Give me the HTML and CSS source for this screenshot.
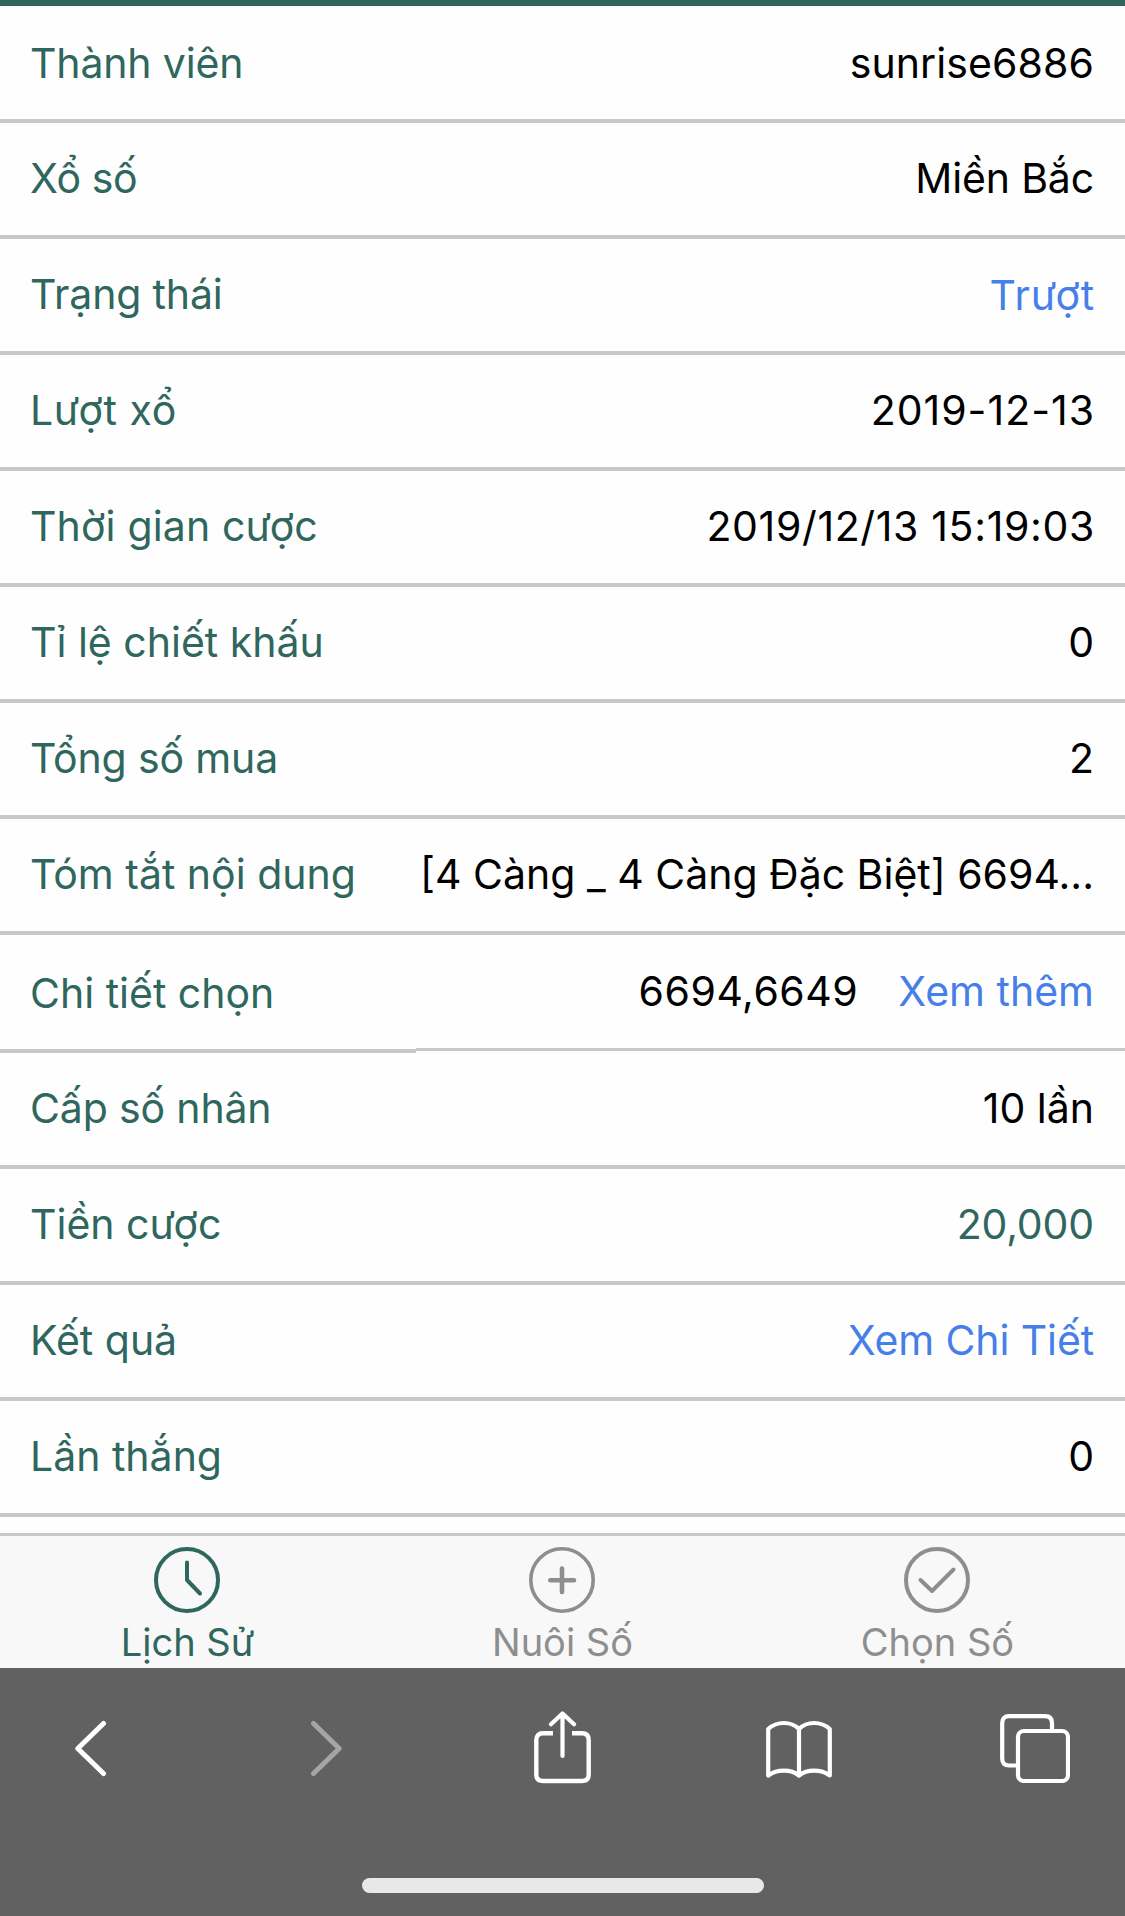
FILE: index.html
```html
<!DOCTYPE html>
<html lang="vi">
<head>
    <meta charset="UTF-8">
    <meta name="viewport" content="width=device-width, initial-scale=1.0">
    <title>Chi tiết cược</title>
    <link rel="stylesheet" href="styles.css">
</head>
<body>

    <div class="page">
        <header class="header"></header>

        <main class="list">
            <div class="row first">
                <span class="label tight">Thành viên</span>
                <span class="value user">sunrise6886</span>
            </div>
            <div class="row">
                <span class="label tighter">Xổ số</span>
                <span class="value tight">Miền Bắc</span>
            </div>
            <div class="row">
                <span class="label tight">Trạng thái</span>
                <span class="value status blue">Trượt</span>
            </div>
            <div class="row">
                <span class="label wide">Lượt xổ</span>
                <span class="value date">2019-12-13</span>
            </div>
            <div class="row">
                <span class="label loose">Thời gian cược</span>
                <span class="value time">2019/12/13 15:19:03</span>
            </div>
            <div class="row">
                <span class="label">Tỉ lệ chiết khấu</span>
                <span class="value">0</span>
            </div>
            <div class="row">
                <span class="label tight">Tổng số mua</span>
                <span class="value">2</span>
            </div>
            <div class="row">
                <span class="label">Tóm tắt nội dung</span>
                <span class="value">[4 Càng _ 4 Càng Đặc Biệt] 6694...</span>
            </div>
            <div class="row split">
                <div class="cell-label"><span class="label">Chi tiết chọn</span></div>
                <div class="cell-value">
                    <span class="value numbers">6694,6649</span>
                    <a class="value blue">Xem thêm</a>
                </div>
            </div>
            <div class="row">
                <span class="label tight">Cấp số nhân</span>
                <span class="value">10 lần</span>
            </div>
            <div class="row">
                <span class="label">Tiền cược</span>
                <span class="value green tight">20,000</span>
            </div>
            <div class="row">
                <span class="label">Kết quả</span>
                <a class="value blue detail">Xem Chi Tiết</a>
            </div>
            <div class="row">
                <span class="label">Lần thắng</span>
                <span class="value">0</span>
            </div>
        </main>

        <nav class="tabs">
            <a class="tab active">
                <svg width="66" height="66" viewBox="0 0 66 66">
                    <circle cx="33" cy="33" r="31"/>
                    <path d="M33 15.5V33L46 46.5"/>
                </svg>
                <span>Lịch Sử</span>
            </a>
            <a class="tab">
                <svg width="66" height="66" viewBox="0 0 66 66">
                    <circle cx="33" cy="33" r="31.2" stroke-width="3.6"/>
                    <path d="M33 21.5V45M21.3 33.2H45" stroke-width="4.6"/>
                </svg>
                <span>Nuôi Số</span>
            </a>
            <a class="tab">
                <svg width="66" height="66" viewBox="0 0 66 66">
                    <circle cx="33" cy="33" r="31"/>
                    <path d="M16.5 33L28 44L49.5 22.5"/>
                </svg>
                <span>Chọn Số</span>
            </a>
        </nav>

        <footer class="toolbar">
            <div class="tools">
                <!-- back -->
                <svg width="32" height="57" viewBox="0 0 32 57">
                    <path d="M28.5 3.5L2.8 28.5L28.5 53.5" stroke-width="5"/>
                </svg>
                <!-- forward -->
                <svg class="disabled" width="32" height="57" viewBox="0 0 32 57">
                    <path d="M2.5 3.5L28.2 28.5L2.5 53.5" stroke-width="5"/>
                </svg>
                <!-- share -->
                <svg class="share" width="58" height="73" viewBox="0 0 58 73">
                    <path d="M19 22.3H9Q2.3 22.3 2.3 29V63.5Q2.3 70 9 70H48Q54.7 70 54.7 63.5V29Q54.7 22.3 48 22.3H38" stroke-width="4.4" stroke-linecap="butt"/>
                    <path d="M28.5 45V3M17 13.3L28.5 2.4L40 13.3" stroke-width="4.2"/>
                </svg>
                <!-- bookmarks -->
                <svg class="book" width="66" height="59" viewBox="0 0 66 59">
                    <path d="M2.2 55.5V9C11 1 25 1 33 9C41 1 55 1 63.8 9V55.5C55 49 41 49 33 55.5C25 49 11 49 2.2 55.5ZM33 9V55" stroke-width="4.2"/>
                </svg>
                <!-- open pages -->
                <svg class="pages" width="70" height="69" viewBox="0 0 70 69">
                    <path d="M16 51.5H9Q2.2 51.5 2.2 44.5V9Q2.2 2.2 9 2.2H45Q52 2.2 52 9V15" stroke-width="4.2" stroke-linecap="butt"/>
                    <rect x="18" y="17" width="50" height="50" rx="6" stroke-width="4.2"/>
                </svg>
            </div>
            <div class="home-bar"></div>
        </footer>
    </div>

</body>
</html>
```

FILE: styles.css
```css
body {
    margin: 0;
    background-color: #fefefe;
    font-family: Inter, "Liberation Sans", sans-serif;
    font-size: 41px;
    color: #000;
}
.page {
    display: flex;
    flex-direction: column;
    height: 1916px;
    overflow: hidden;
}
.header {
    height: 6px;
    flex: none;
    background-color: #2f665d;
}
.list {
    flex: 1;
}
.row {
    box-sizing: border-box;
    height: 116px;
    padding: 0 31px 2px 30px;
    border-bottom: 4px solid #c7c7cc;
    display: flex;
    justify-content: space-between;
    align-items: center;
    line-height: 50px;
    white-space: nowrap;
}
.row.first {
    height: 117px;
    padding-top: 3px;
}
.label, .green {
    color: #2f665d;
}
.blue {
    color: #477fe8;
}
.tight {
    letter-spacing: -0.15px;
}
.tighter {
    letter-spacing: -0.4px;
}
.loose {
    letter-spacing: 0.15px;
}
.wide {
    letter-spacing: 0.6px;
}
.user {
    letter-spacing: 0.1px;
}
.status {
    letter-spacing: 0.8px;
    margin-right: -1px;
    padding-top: 2px;
}
.date {
    letter-spacing: 1px;
    margin-right: -1px;
}
.time {
    letter-spacing: 0.65px;
    margin-right: -1px;
}
.numbers {
    letter-spacing: 0.55px;
}
.detail {
    letter-spacing: -0.1px;
}
.row.split {
    height: 118px;
    padding: 0;
    border: none;
    align-items: flex-start;
}
.cell-label, .cell-value {
    box-sizing: border-box;
    display: flex;
    align-items: center;
}
.cell-label {
    width: 416px;
    height: 118px;
    padding: 1px 0 0 30px;
    border-bottom: 4px solid #c7c7cc;
}
.cell-value {
    flex: 1;
    height: 116px;
    padding: 0 31px 2px 0;
    justify-content: flex-end;
    gap: 40px;
    border-bottom: 3px solid #c7c7cc;
}
.tabs {
    box-sizing: border-box;
    height: 135px;
    flex: none;
    display: flex;
    border-top: 3px solid #c7c7cc;
    background-color: #f8f8f8;
}
.tab {
    flex: 1;
    display: flex;
    flex-direction: column;
    align-items: center;
    padding-top: 11px;
    color: #8e8e8e;
    font-size: 38px;
    line-height: 46px;
}
.tab.active {
    color: #2f665d;
}
.tab svg {
    margin-right: 1px;
}
.tab span {
    margin-top: 6px;
}
svg {
    display: block;
    fill: none;
    stroke: currentColor;
    stroke-width: 4;
    stroke-linecap: round;
    stroke-linejoin: round;
}
.toolbar {
    box-sizing: border-box;
    height: 248px;
    flex: none;
    display: flex;
    flex-direction: column;
    justify-content: space-between;
    align-items: center;
    padding: 43px 0 23px;
    background-color: #616161;
    color: #fff;
}
.tools {
    box-sizing: border-box;
    width: 100%;
    height: 73px;
    display: grid;
    grid-template-columns: 236px 223px 232px 234px 70px;
    align-items: start;
    padding-left: 75px;
}
.tools svg {
    margin-top: 9px;
}
.tools .share {
    margin-top: 0;
}
.tools .pages {
    margin-top: 3px;
}
.disabled {
    color: #a5a5a5;
}
.home-bar {
    width: 402px;
    height: 15px;
    border-radius: 8px;
    background-color: #e8e8e8;
}
```
